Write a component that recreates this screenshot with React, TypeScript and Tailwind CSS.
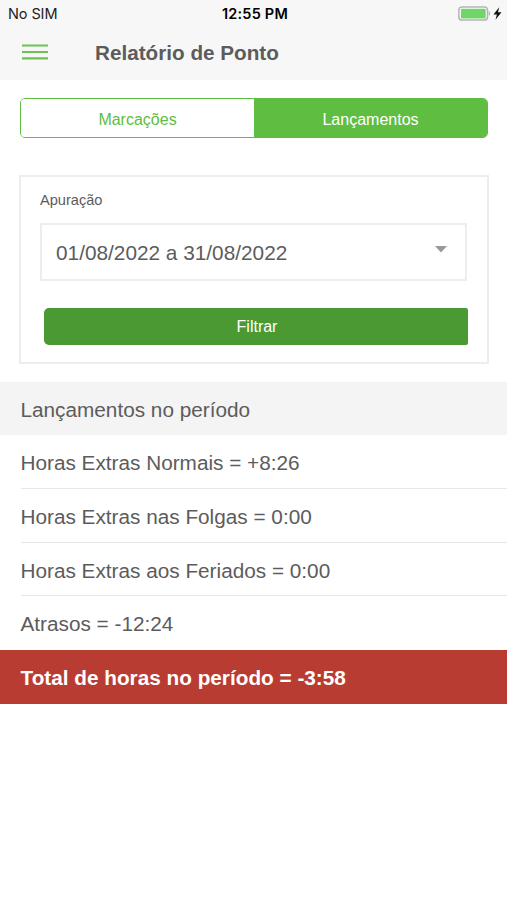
import React, { useState } from "react";

interface Entry {
  label: string;
  value: string;
}

const entries: Entry[] = [
  { label: "Horas Extras Normais", value: "+8:26" },
  { label: "Horas Extras nas Folgas", value: "0:00" },
  { label: "Horas Extras aos Feriados", value: "0:00" },
  { label: "Atrasos", value: "-12:24" },
];

const StatusBar: React.FC = () => (
  <div className="grid h-7 grid-cols-3 items-center pl-2 pr-[5px] font-['Inter',sans-serif] text-black">
    <span className="text-[14.5px] tracking-[-0.1px] text-[#222]">No SIM</span>
    <span className="text-center text-[14.5px] font-semibold tracking-[0.2px]">12:55 PM</span>
    <div className="flex items-center justify-end gap-[2px] pb-px">
      <svg width="33" height="15" viewBox="0 0 33 15">
        <rect x="0.9" y="0.9" width="28.6" height="13.2" rx="3.2" fill="#fff" stroke="#b4b4b4" strokeWidth="1.5" />
        <rect x="2.9" y="2.8" width="24.8" height="9.6" rx="1" fill="#71d56c" />
        <path d="M30.8 5c1.7.7 1.7 4.3 0 5z" fill="#aeaeae" />
      </svg>
      <svg width="9" height="13" viewBox="0 0 9 13">
        <path d="M6.2 0.3 0.5 7.4H3.9L2.5 12.7 8.5 5.3H5Z" fill="#111" />
      </svg>
    </div>
  </div>
);

const App: React.FC = () => {
  const [tab, setTab] = useState<string>("lancamentos");

  const tabClass = (name: string) =>
    tab === name ? "bg-[#5fbd41] text-white" : "bg-white text-[#5fbd41]";

  return (
    <div className="min-h-screen bg-white font-['Liberation_Sans',sans-serif] text-[#5c5c5c]">
      <header className="h-20 bg-[#f7f7f7]">
        <StatusBar />
        <div className="flex h-12 items-center pl-[22px]">
          <button aria-label="Menu" className="w-[26px]">
            <svg width="26" height="16" viewBox="0 0 26 16">
              <path d="M0 1.5H26M0 8H26M0 14.4H26" stroke="#6cc152" strokeWidth="2.2" />
            </svg>
          </button>
          <h1 className="ml-[47px] pt-[2px] text-[20.7px] font-bold leading-6">Relatório de Ponto</h1>
        </div>
      </header>

      <div className="mx-5 mt-[18px] flex h-10 w-[468px] overflow-hidden rounded-[5px] border border-[#5fbd41] text-base">
        <button onClick={() => setTab("marcacoes")} className={`flex-1 pt-[4px] ${tabClass("marcacoes")}`}>
          Marcações
        </button>
        <button onClick={() => setTab("lancamentos")} className={`flex-1 pt-[4px] ${tabClass("lancamentos")}`}>
          Lançamentos
        </button>
      </div>

      <section className="ml-[19px] mt-[37px] h-[189px] w-[470px] border-2 border-[#ededed] px-[19px] pt-[13px]">
        <p className="text-[14.6px] leading-5">Apuração</p>
        <div className="mt-[13px] flex h-[58px] w-[427px] items-center justify-between border-2 border-[#ededed] pl-[14px] pr-[18px] text-[20.8px]">
          <span className="pt-[2px]">01/08/2022 a 31/08/2022</span>
          <svg width="12" height="7" viewBox="0 0 12 7" className="mb-[6px]">
            <path d="M0 0H12L6 6.6Z" fill="#999" />
          </svg>
        </div>
        <button className="ml-1 mt-[27px] h-[37px] w-[424px] rounded-l-[5px] rounded-r-[2px] bg-[#4b9932] pl-[2px] text-base text-white">
          Filtrar
        </button>
      </section>

      <h2 className="mt-[18px] h-[53px] bg-[#f4f4f4] pl-[20.5px] text-[20.75px] leading-[56px]">
        Lançamentos no período
      </h2>
      <ul className="text-[20.75px]">
        {entries.map((entry, i) => (
          <li
            key={entry.label}
            className={`ml-[20.5px] h-[53.75px] leading-[55px] ${i < entries.length - 1 ? "border-b border-[#e8e8e8]" : ""}`}
          >
            {entry.label} = {entry.value}
          </li>
        ))}
        <li className="h-[53.5px] bg-[#b93c32] pl-[20.5px] font-bold leading-[55px] text-white">
          Total de horas no período = -3:58
        </li>
      </ul>
    </div>
  );
};

export default App;
